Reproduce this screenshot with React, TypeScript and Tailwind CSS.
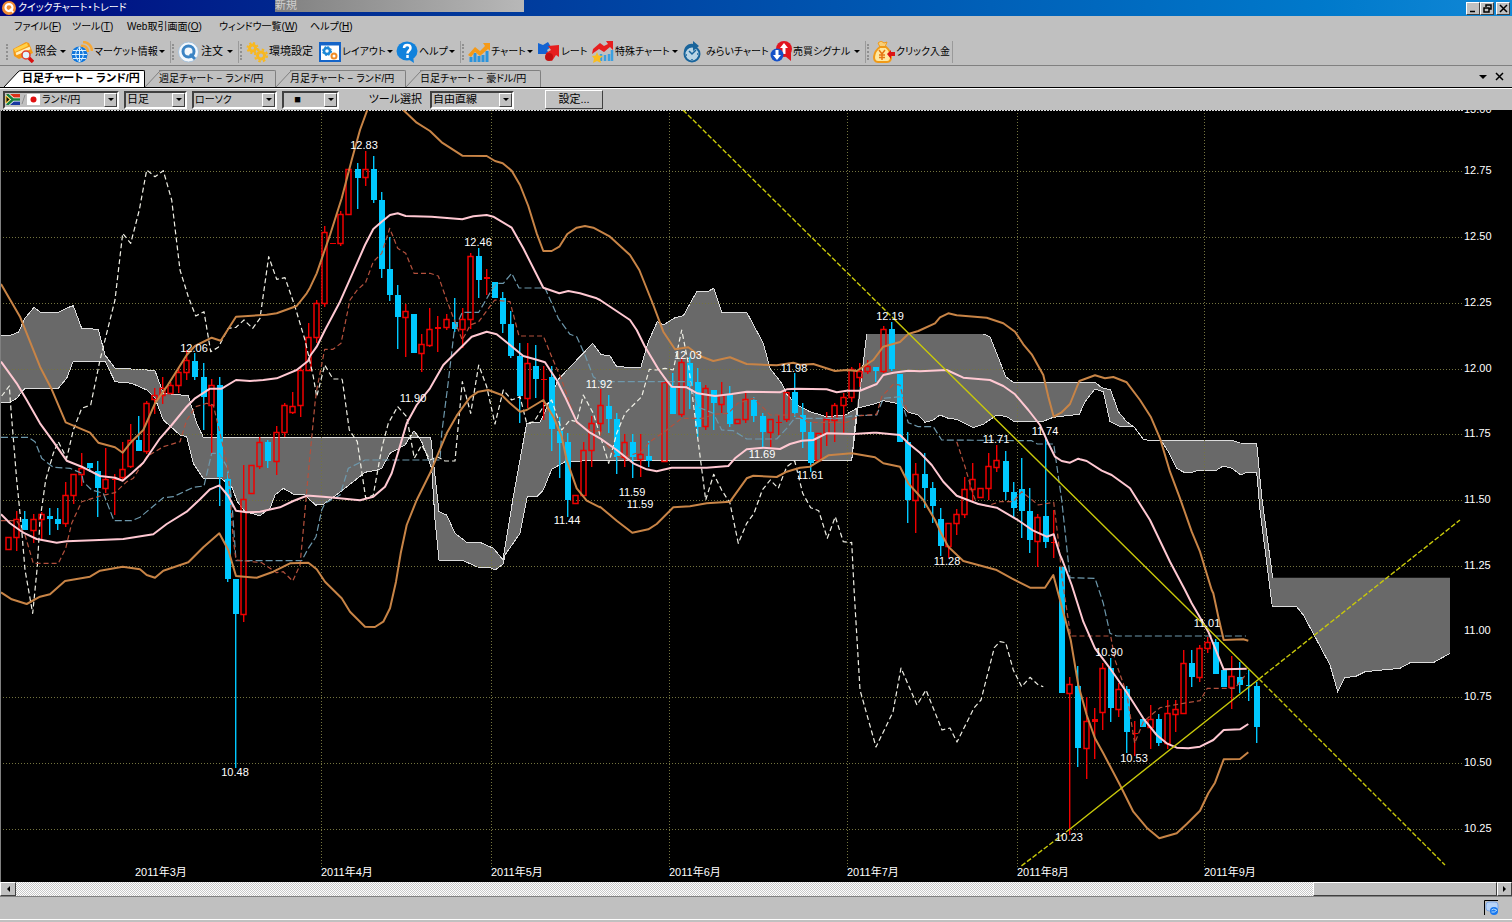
import type { ReactNode } from 'react';
import clsx from 'clsx';

const UI_FONT = "font-['Liberation_Sans','Noto_Sans_CJK_JP',sans-serif]";
const KANA = "[font-feature-settings:'palt']";

// kana labels are set one step smaller than kanji-only ones
const labelSize = (text: string) => (/[ぁ-んァ-ン]/.test(text) ? 'text-[10px]' : 'text-[11px]');

type Candle = [slot: number, top: number, bottom: number, high: number, low: number, kind: 'u' | 'd'];

const candles: Candle[] = [
  [0, 537, 549, 537, 549, 'u'], [1, 519, 537, 511, 551, 'u'], [2, 519, 530, 511, 530, 'd'], [3, 519, 530, 514, 543, 'u'],
  [4, 514, 519, 512, 539, 'u'], [5, 516, 519, 508, 535, 'd'], [6, 519, 524, 508, 530, 'd'], [7, 495, 523, 482, 527, 'u'],
  [8, 474, 495, 474, 504, 'u'], [9, 468, 474, 453, 486, 'u'], [10, 463, 468, 463, 472, 'd'], [11, 471, 488, 461, 517, 'd'],
  [12, 479, 488, 448, 493, 'u'], [13, 479, 480, 474, 515, 'u'], [14, 469, 477, 442, 480, 'u'], [15, 440, 466, 424, 468, 'u'],
  [16, 440, 451, 416, 451, 'd'], [17, 403, 451, 401, 454, 'u'], [18, 395, 399, 388, 414, 'u'], [19, 388, 395, 377, 404, 'u'],
  [20, 385, 393, 382, 393, 'u'], [21, 372, 385, 367, 393, 'u'], [22, 360, 372, 350, 380, 'u'], [23, 361, 377, 353, 380, 'd'],
  [24, 377, 397, 363, 430, 'd'], [25, 385, 405, 379, 453, 'u'], [26, 385, 477, 377, 506, 'd'], [27, 479, 579, 472, 582, 'd'],
  [28, 579, 614, 579, 768, 'd'], [29, 499, 614, 465, 622, 'u'], [30, 465, 493, 465, 493, 'u'], [31, 442, 466, 437, 469, 'u'],
  [32, 442, 461, 440, 468, 'd'], [33, 432, 461, 426, 475, 'u'], [34, 405, 432, 403, 437, 'u'], [35, 406, 412, 392, 414, 'u'],
  [36, 370, 405, 367, 417, 'u'], [37, 337, 370, 323, 370, 'u'], [38, 303, 337, 300, 343, 'u'], [39, 232, 303, 226, 307, 'u'],
  [40, 243, 244, 243, 244, 'u'], [41, 214, 243, 211, 246, 'u'], [42, 169, 214, 169, 214, 'u'], [43, 169, 178, 163, 209, 'd'],
  [44, 169, 177, 151, 186, 'u'], [45, 169, 200, 156, 203, 'd'], [46, 200, 269, 192, 278, 'd'], [47, 269, 295, 237, 301, 'd'],
  [48, 295, 317, 285, 349, 'd'], [49, 311, 317, 304, 357, 'u'], [50, 314, 353, 314, 353, 'd'], [51, 344, 353, 334, 372, 'u'],
  [52, 329, 345, 308, 347, 'u'], [53, 327, 329, 316, 352, 'u'], [54, 319, 327, 314, 330, 'u'], [55, 322, 329, 298, 332, 'd'],
  [56, 319, 329, 308, 348, 'u'], [57, 256, 319, 253, 329, 'u'], [58, 256, 280, 248, 298, 'd'], [59, 277, 279, 269, 295, 'u'],
  [60, 282, 298, 282, 298, 'd'], [61, 298, 324, 292, 333, 'd'], [62, 324, 356, 311, 358, 'd'], [63, 356, 396, 343, 423, 'd'],
  [64, 363, 398, 343, 408, 'u'], [65, 366, 379, 345, 398, 'd'], [66, 379, 380, 366, 420, 'u'], [67, 377, 429, 366, 451, 'd'],
  [68, 431, 443, 417, 478, 'd'], [69, 442, 500, 433, 517, 'd'], [70, 495, 503, 495, 503, 'u'], [71, 450, 495, 442, 495, 'u'],
  [72, 423, 450, 416, 467, 'u'], [73, 405, 423, 389, 432, 'u'], [74, 406, 419, 395, 433, 'd'], [75, 419, 457, 413, 474, 'd'],
  [76, 442, 457, 434, 467, 'u'], [77, 442, 457, 434, 478, 'd'], [78, 454, 459, 434, 477, 'u'], [79, 456, 461, 441, 467, 'd'],
  [81, 382, 461, 382, 461, 'u'], [82, 387, 414, 373, 414, 'd'], [83, 362, 414, 357, 417, 'u'], [84, 363, 386, 357, 409, 'd'],
  [85, 382, 427, 368, 437, 'd'], [86, 388, 426, 385, 430, 'u'], [87, 390, 403, 390, 430, 'd'], [88, 395, 404, 382, 413, 'u'],
  [89, 395, 424, 386, 427, 'd'], [90, 419, 423, 419, 423, 'u'], [91, 399, 419, 392, 423, 'u'], [92, 400, 416, 397, 422, 'd'],
  [93, 416, 432, 413, 447, 'd'], [94, 419, 432, 419, 447, 'u'], [95, 422, 423, 415, 435, 'u'], [96, 392, 419, 392, 422, 'u'],
  [97, 392, 413, 373, 417, 'd'], [98, 415, 432, 403, 448, 'd'], [99, 432, 463, 422, 472, 'd'], [100, 433, 460, 433, 460, 'u'],
  [101, 419, 433, 412, 446, 'u'], [102, 405, 420, 403, 442, 'u'], [103, 397, 405, 393, 433, 'u'], [104, 369, 397, 367, 402, 'u'],
  [105, 371, 377, 363, 387, 'u'], [106, 366, 371, 360, 374, 'u'], [107, 367, 371, 367, 382, 'd'], [108, 329, 371, 326, 373, 'u'],
  [109, 329, 369, 322, 371, 'd'], [110, 374, 442, 374, 442, 'd'], [111, 442, 500, 432, 523, 'd'], [112, 474, 500, 463, 533, 'u'],
  [113, 474, 488, 453, 508, 'd'], [114, 488, 506, 482, 523, 'd'], [115, 519, 546, 508, 556, 'd'], [116, 523, 546, 523, 558, 'u'],
  [117, 514, 523, 509, 535, 'u'], [118, 489, 514, 477, 518, 'u'], [119, 479, 489, 463, 501, 'u'], [120, 488, 497, 488, 497, 'u'],
  [121, 466, 488, 453, 500, 'u'], [122, 460, 467, 445, 472, 'u'], [123, 461, 492, 451, 500, 'd'], [124, 492, 508, 482, 518, 'd'],
  [125, 489, 511, 458, 538, 'd'], [126, 511, 540, 488, 553, 'd'], [127, 517, 541, 514, 567, 'u'], [128, 516, 542, 437, 548, 'd'],
  [129, 542, 543, 510, 558, 'u'], [130, 567, 693, 567, 693, 'd'], [131, 684, 693, 677, 835, 'u'], [132, 686, 748, 666, 767, 'd'],
  [133, 721, 748, 697, 779, 'u'], [134, 719, 722, 708, 759, 'u'], [135, 668, 712, 663, 730, 'u'], [136, 668, 708, 658, 722, 'd'],
  [137, 689, 709, 683, 717, 'u'], [138, 689, 732, 686, 753, 'd'], [139, 733, 734, 721, 756, 'u'], [140, 719, 727, 719, 727, 'd'],
  [141, 719, 727, 705, 749, 'u'], [142, 719, 743, 714, 746, 'd'], [143, 713, 743, 700, 749, 'u'], [144, 709, 714, 700, 732, 'u'],
  [145, 663, 713, 650, 713, 'u'], [146, 663, 677, 650, 687, 'd'], [147, 648, 677, 645, 682, 'u'], [148, 642, 648, 637, 653, 'u'],
  [149, 642, 674, 639, 674, 'd'], [150, 670, 687, 670, 687, 'd'], [151, 676, 687, 656, 709, 'u'], [152, 677, 685, 662, 693, 'd'],
  [153, 685, 686, 670, 701, 'd'], [154, 686, 727, 682, 743, 'd'],
];

// Series are kept per tile: each tile has an origin and its points are in thirds of a chart unit
const tiles = {
  A: [0, 110], B: [0, 480], C: [310, 110], D: [310, 380], E: [600, 270],
  F: [840, 300], G: [1000, 560], H: [1240, 420], I: [1080, 350],
} as const;

type Piece = [keyof typeof tiles, string];

function points(pieces: Piece[]) {
  return pieces
    .flatMap(([tile, data]) =>
      data.split(' ').map(p => {
        const [x, y] = p.split(',').map(Number);
        return `${(tiles[tile][0] + x / 3).toFixed(1)},${(tiles[tile][1] + y / 3).toFixed(1)}`;
      }),
    )
    .join(' ');
}

const pink: Piece[][] = [
  [
    ['A', '3,755 50,820 80,870 120,940 160,995 200,1052 245,1070 300,1098 345,1103 368,1112 395,1090 430,1058 480,985 515,945 560,890 585,865 630,836 665,836 708,810 750,813 790,810 830,805 890,780 925,752'],
    ['C', '0,738 20,710 45,660 90,575 130,485 165,405 190,357 215,335 240,315 263,310 287,318 365,320 457,328 490,319 530,315 550,320 605,353 640,415 700,533 748,550 775,543 810,550 860,565'],
    ['E', '0,90 90,150 110,180 135,230 175,297 200,332 215,350 260,352 292,370 345,378 395,372 440,365 540,367 560,358 590,356 680,358 710,367 740,362 780,362 830,342 850,315'],
    ['F', '160,218 205,212 240,214 320,210 370,233 450,240 490,258 525,283 565,330 600,375 625,430 645,470 665,483 690,488 715,476'],
    ['I', '0,328 20,333 65,362 95,375 150,415 210,510 270,635 315,720'],
    ['G', '575,130 625,215 671,328 740,326'],
  ],
  [
    ['B', '3,103 30,130 70,158 110,177 170,188 200,184 280,181 370,177 460,163 500,132 560,95 600,58 630,28 658,16 685,48 708,92 740,97 780,95 840,82 880,63 920,47'],
    ['D', '0,347 40,350 80,354 150,361 190,350 225,320 245,280 265,215 290,130 320,75'],
    ['C', '360,835 400,765 440,725 485,680 530,665 560,673 600,705 640,738 675,748 705,757 730,795'],
    ['D', '740,0 765,50 800,125 840,158'],
    ['E', '0,505 50,540 100,580 140,598 170,604 215,593 320,593 385,588 405,565 440,538 490,533 540,537 570,522 605,512 640,510 680,490 760,492 820,488'],
    ['F', '110,398 180,405 205,430 240,458 275,495 310,545 350,587 415,612 470,623 530,658 580,692 620,710 641,703 660,765'],
    ['G', '187,0 215,75 250,185 285,265 330,325 380,397 430,475 470,525 500,550 530,563 565,565 600,560 640,540 671,510 720,508 745,492'],
  ],
];

const orange: Piece[][] = [
  [
    ['A', '3,522 60,620 120,770 155,838 197,937 270,968 295,998 345,1012 368,1028 390,1000 430,960 465,880 500,830 560,735 585,708 635,683 662,692 708,620 800,614 830,610 890,588 920,550'],
    ['C', '0,533 20,490 60,375 95,265 125,150 150,60 172,0'],
  ],
  [
    ['C', '280,0 320,38 360,63 395,97 457,137 530,138 555,153 578,160 605,182 630,225 655,288 680,370 700,423 725,423 748,410 772,372 800,353 825,348 850,353 900,380'],
    ['E', '90,-45 118,0 160,105 190,185 225,238 265,232 300,258 340,273 390,262 440,282 530,286 580,278 600,284 640,282 705,303 740,300 770,303 820,270 850,230'],
    ['F', '180,126 205,102 235,93 285,70 300,52 325,40 350,46 440,53 490,70 525,95 550,133 575,163 610,225 625,290 641,350 665,337 690,312 718,243 765,226 795,235 820,231'],
    ['I', '140,97 180,150 212,200 240,265 270,365 300,445 335,545 360,605 395,720'],
    ['G', '640,100 655,170 671,240 730,238 745,242'],
  ],
  [
    ['B', '3,337 35,358 80,372 120,350 150,343 195,303 270,290 300,272 368,260 420,268 440,285 465,293 490,272 565,247 610,202 658,160 685,210 708,288 770,293 820,275 870,250 925,248'],
    ['D', '0,552 20,568 45,605 95,655 120,695 165,740 195,741 220,725 240,685 258,605 272,520 290,435 320,360 360,280 385,220 410,160 440,107 480,52 505,35 535,30 575,45 600,70 630,95 650,90 700,60 730,110 755,170 770,240 800,325 830,362 870,382'],
    ['E', '0,710 50,752 97,788 145,778 170,762 220,712 270,709 320,700 390,695 440,625 460,617 530,621 560,605 600,593 630,590 685,556 755,550 825,562 850,580'],
    ['F', '180,500 205,550 250,600 285,660 301,695 325,740 370,783 470,810 515,835 570,863 615,863'],
    ['G', '160,45 212,240 235,375 260,465 285,535 310,580 360,675 400,755 440,803 478,835 530,820 560,792 600,752 625,700 645,668 671,598 720,597 745,577'],
  ],
];

const lagging: Piece[][] = [
  [
    ['A', '5,858 28,828 33,900 50,1110'],
    ['B', '65,150 75,270 98,400 112,260 120,120 137,0'],
    ['A', '160,1030 175,995 200,1045 220,960 245,895 272,885 300,750 345,570 368,370 392,400 418,300 440,180 465,200 490,182 515,270 540,480 565,560 587,618 612,605 632,725 655,712 685,655 708,652 732,630 758,655 780,625 806,440 830,508 855,503 885,590 915,690 940,800 950,860'],
    ['C', '44,765 69,807 95,807'],
    ['D', '97,0 118,150 142,185 167,355 190,345 215,205 235,130 263,80 290,110 313,235 335,195 360,240 382,230 405,243 435,243 457,5 482,100'],
    ['C', '506,765 530,830'],
    ['D', '555,132 580,30 605,60 630,50 650,130 672,125 700,80 725,60 755,150 780,120 800,125 820,45 850,100'],
    ['E', '26,580 50,490 75,430 125,380 148,298 170,300 195,295 220,300 245,180 265,280 290,480 317,690 341,613 365,660 390,700 415,820 440,760 462,730 487,660 511,630 535,655 560,590 584,573 608,670 632,713 656,722 682,805 706,740 730,815 753,818'],
    ['F', '35,727 42,865'],
    ['G', '-420,390 -372,561 -321,456 -297,324 -249,435 -222,390 -174,510 -150,504 -129,546 -78,444 -57,420 -17,263 0,245 17,248 40,330 65,380 90,352 115,375 130,380'],
  ],
];

const base: Piece[][] = [
  [
    ['A', '3,982 85,982 105,995 125,1045 160,1072 210,1075 245,1090'],
    ['B', '250,5 275,30 310,40 342,122 395,122 420,112 490,53 520,50 580,22 612,18'],
    ['A', '635,1030 658,1030 683,1075'],
    ['B', '695,60 708,242 905,242 925,205 945,175'],
    ['D', '18,470 35,390 45,370 90,345 115,265 165,240 390,240 395,160'],
    ['C', '415,815 433,660 457,607 506,607 545,540 560,520 580,520 605,490 627,534 705,534 745,625 780,673 800,680 825,735 850,800'],
    ['E', '0,335 270,335 292,410 340,430 365,480 400,482 440,507 530,507 560,475 584,445 720,445 760,437 830,435'],
    ['F', '130,295 180,290 205,368 235,380 280,380 305,420 575,422 592,432 641,432 665,600 690,833 765,835'],
    ['G', '310,130 330,220 350,228 738,228'],
  ],
];

const conversion: Piece[][] = [
  [
    ['B', '3,122 50,122 75,165 100,250 175,250 197,205 215,130 245,65 300,48 345,38 380,5'],
    ['A', '400,1105 440,1040 490,1010 540,995 560,930 587,890 620,880 640,885 660,970 683,1070'],
    ['B', '700,180 708,240 785,248 830,278 850,275 878,303 900,255 910,150'],
    ['A', '925,1090 945,880'],
    ['C', '20,840 44,718 69,718 93,700 120,570 142,540 167,517 190,455 215,430 239,355 263,415 287,430 312,490 360,490 385,498 410,570 433,630 457,690 481,645 506,635 554,570 600,575 627,678 700,678 725,740 755,810'],
    ['D', '800,130 850,155 875,150'],
    ['E', '0,500 50,560 75,560 125,545 150,515 200,480 245,445 310,445 340,433 385,430 413,400 460,385 487,410 510,435 590,435 625,457 740,457 780,437 830,433'],
    ['F', '125,290 160,253 180,255 195,315 205,340'],
  ],
  [
    ['F', '350,425 375,500 398,580 410,610 440,618 480,605 520,605 545,575 595,615 641,607 655,720'],
    ['G', '187,60 212,228 332,228 345,300 380,400 404,550 430,485 480,443 550,430 600,422 622,385 705,385 740,340'],
  ],
];

const spanA: Piece[] = [
  ['A', '3,676 30,676 55,667 75,625 102,592 122,607 175,607 200,594 220,587 245,655 295,658 315,735 345,775 415,778 465,782 490,850 565,857 590,940 610,982 930,982'],
  ['D', '362,172 387,395 410,405 435,460 470,487 510,487 550,505 580,540 582,520 610,350 650,130 690,127 705,95'],
  ['C', '745,808 800,750 848,700 870,730'],
  ['E', '0,253 30,258 50,290 122,293 145,215 172,155 190,165 225,143 250,137 290,65 325,64 341,55 365,127 440,127 490,220 510,295 545,340 560,372 590,405 630,425 680,440 735,435 770,415'],
];
const spanB: Piece[] = [
  ['A', '3,877 30,877 50,865 75,835 175,835 200,805 220,753 315,753 345,815 395,820 440,840 465,865 490,930 540,975 560,980 580,1060 610,1105 665,1107 683,1120'],
  ['B', '695,20 712,65 735,95 780,107 810,85 825,45 850,25 880,42 915,45 935,65 950,77'],
  ['D', '15,375 40,373 70,352 130,305 165,277 200,270 215,265 240,220 285,195 312,152 335,185 365,265 375,420 387,540 460,542 505,562 540,563 555,570 580,552 585,525 630,460 652,350 680,350 700,330 725,268 765,245'],
  ['E', '0,571 755,571 770,415'],
];
const spanC: Piece[] = [
  ['E', '770,415 800,193'],
  ['F', '80,102 435,102 450,110 470,160 497,230 520,247 765,247 785,263 812,270 835,335 860,365 880,380'],
];
const spanD: Piece[] = [
  ['E', '770,415 820,403 850,392'],
  ['F', '130,302 180,312 205,337 235,345 255,367 280,360 300,345 325,355 350,358 400,383 430,373 470,345 500,350 520,363 612,363 640,352 718,343 735,305 765,267 790,275 810,365 840,380 880,380'],
];
const spanLink: Piece[] = [['I', '160,228 190,268 205,271 243,271']];
const spanE: Piece[] = [
  ['I', '243,271 455,271 480,279 530,280'],
  ['H', '65,230 98,473 630,473'],
];
const spanF: Piece[] = [
  ['I', '243,271 265,305 290,355 312,367 335,367 360,360 410,360 430,348 455,355 483,375 500,367 530,367'],
  ['H', '60,270 97,560 170,560 190,585 225,650 270,735 293,815 315,772 345,770 375,755 480,745 512,727 582,727 630,700'],
];

function reversed(p: string) {
  return p.split(' ').reverse().join(' ');
}

const clouds: [Piece[], Piece[]][] = [
  [spanA, spanB],
  [spanC, spanD],
  [spanE, spanF],
];

const priceLabels: [string, number, number][] = [
  ['12.06', 194, 348], ['12.83', 364, 145], ['12.46', 478, 242], ['11.90', 413, 398], ['10.48', 235, 772],
  ['11.44', 567, 520], ['11.92', 599, 384], ['11.59', 632, 492], ['11.59', 640, 504], ['12.03', 688, 355],
  ['11.98', 794, 368], ['11.69', 762, 454], ['11.61', 810, 475], ['12.19', 890, 316], ['11.28', 947, 561],
  ['11.71', 996, 439], ['11.74', 1045, 431], ['11.01', 1207, 623], ['10.90', 1109, 652], ['10.53', 1134, 758],
  ['10.23', 1069, 837],
];

const axis: [string, number, boolean][] = [
  ['13.00', 109, false], ['12.75', 170, true], ['12.50', 236, true], ['12.25', 302, true], ['12.00', 368, true],
  ['11.75', 433, true], ['11.50', 499, true], ['11.25', 565, true], ['11.00', 630, false], ['10.75', 696, true],
  ['10.50', 762, true], ['10.25', 828, true],
];

const months: [string, number, boolean][] = [
  ['2011年3月', 135, false], ['2011年4月', 321, true], ['2011年5月', 491, true], ['2011年6月', 669, true],
  ['2011年7月', 847, true], ['2011年8月', 1017, true], ['2011年9月', 1204, true],
];

function Series({ data, className, dash, width = 1 }: { data: Piece[][]; className: string; dash?: string; width?: number }) {
  return (
    <g className={className} fill="none" strokeWidth={width} strokeDasharray={dash} strokeLinejoin="round">
      {data.map((d, i) => (
        <polyline key={i} points={points(d)} />
      ))}
    </g>
  );
}

function PriceChart() {
  return (
    <svg viewBox="0 110 1512 772" className="block w-full h-auto bg-black" role="img" aria-label="ランド/円 日足">
      {clouds.map(([a, b], i) => (
        <polygon key={i} points={`${points(a)} ${reversed(points(b))}`} className="fill-[#696969]" />
      ))}
      <g className="stroke-[#dcdcdc]" fill="none" shapeRendering="crispEdges">
        {[spanA, spanB, spanD, spanLink, spanF].map((s, i) => (
          <polyline key={i} points={points(s)} />
        ))}
        <polyline points={points([['E', '755,571 800,193']])} />
        <polyline points={points([['F', '430,102 450,110 470,160 497,230 520,247 765,247 785,263 812,270 835,335 860,365 880,380']])} />
        <polyline points={points([['I', '243,271 455,271 480,279 530,280'], ['H', '65,230 98,473']])} />
      </g>

      <g className="stroke-[#74743f]" strokeDasharray="1 2" shapeRendering="crispEdges">
        {axis.filter(a => a[2]).map(([label, y]) => (
          <line key={label} x1={0} x2={1463} y1={y + 1.5} y2={y + 1.5} />
        ))}
        {months.filter(m => m[2]).map(([label, x]) => (
          <line key={label} x1={x + 0.5} x2={x + 0.5} y1={110} y2={867} />
        ))}
      </g>
      <line x1={0} x2={1463} y1={110.5} y2={110.5} className="stroke-[#d8d8d8]" strokeDasharray="2 1" shapeRendering="crispEdges" />

      {candles.map(([slot, top, bottom, high, low, kind]) => {
        const x = Math.round(8.2 + slot * 8.1);
        const h = bottom - top;
        return kind === 'd' ? (
          <g key={slot} className="fill-[#00c8ff]">
            <rect x={x} y={high} width={1.4} height={low - high} />
            <rect x={x - 2} y={top} width={6} height={Math.max(h, 1)} />
          </g>
        ) : (
          <g key={slot} className="fill-[#f00000]">
            <rect x={x} y={high} width={1.4} height={Math.max(top - high, 0)} />
            <rect x={x} y={bottom} width={1.4} height={Math.max(low - bottom, 0)} />
            {h < 4 ? (
              <rect x={x - 2} y={top} width={6} height={h} />
            ) : (
              <rect x={x - 2} y={top + 0.5} width={5} height={h} className="fill-none stroke-[#f00000]" strokeWidth={1.5} />
            )}
          </g>
        );
      })}

      <Series data={lagging} className="stroke-[#f0f0e6]" dash="5 3" width={1.2} />
      <Series data={base} className="stroke-[#6d98ac]" dash="7 3" width={1.2} />
      <Series data={conversion} className="stroke-[#b4503c]" dash="5 3" width={1.2} />
      <Series data={orange} className="stroke-[#c88446]" width={2} />
      <Series data={pink} className="stroke-[#ffc8d2]" width={2} />

      <g className="stroke-[#c8c80a]" fill="none" strokeWidth={1.4}>
        <path d="M892 317L1259 679M1070 829L1259 679" />
        <path d="M683 110L892 317M1259 679L1445 865M1070 829L1020 867M1259 679L1460 520" strokeDasharray="5 2" />
      </g>

      <g className="fill-white font-['Liberation_Sans','Noto_Sans_CJK_JP',sans-serif] text-[11px]">
        {priceLabels.map(([label, x, y]) => (
          <text key={`${label}-${x}`} x={x} y={y + 4} textAnchor="middle">{label}</text>
        ))}
        {axis.map(([label, y]) => (
          <text key={label} x={1464} y={y + 4}>{label}</text>
        ))}
        {months.map(([label, x]) => (
          <text key={label} x={x} y={876}>{label}</text>
        ))}
      </g>
      <rect x={0} y={110} width={1} height={772} className="fill-[#808080]" />
    </svg>
  );
}

function Icon({ children }: { children: ReactNode }) {
  return (
    <svg viewBox="0 0 22 22" className="size-[22px] shrink-0" aria-hidden="true">
      {children}
    </svg>
  );
}

const icons = {
  inquiry: (
    <Icon>
      <path d="M1 8L14 1l3 1 4 10-14 6-5-3z" fill="#f59a16" />
      <path d="M2 8L15 2l1 3L3 11z" fill="#ffd24a" />
      <path d="M4 13l14-6" stroke="#fff0c0" strokeWidth="2.5" />
      <circle cx="14" cy="14" r="4" fill="#dff4ff" stroke="#e04030" strokeWidth="1.5" />
      <path d="M17 17l4 4" stroke="#d81010" strokeWidth="3.5" />
    </Icon>
  ),
  globe: (
    <Icon>
      <circle cx="8.5" cy="13.5" r="8" fill="#1177dc" />
      <path d="M1 13.5h15M8.5 6v15M2 9.5h13M2 17.5h13M8.5 6c-5 4-5 11 0 15M8.5 6c5 4 5 11 0 15" stroke="#d8f0ff" fill="none" />
      <path d="M10 5c4-1 7 2 7 6M12 1c5 0 9 4 9 9" stroke="#f5a838" strokeWidth="2.5" fill="none" />
    </Icon>
  ),
  order: (
    <Icon>
      <circle cx="10.5" cy="11" r="10" fill="#f4f8fc" stroke="#a9c4dc" />
      <circle cx="10.5" cy="10.5" r="5.5" fill="none" stroke="#3c84c4" strokeWidth="3" />
      <path d="M12 13l5 5" stroke="#3c84c4" strokeWidth="3" />
    </Icon>
  ),
  gears: (
    <Icon>
      <circle cx="6.500" cy="7" r="3" fill="none" stroke="#f8b820" strokeWidth="3" />
      <circle cx="6.500" cy="7" r="5" fill="none" stroke="#f8b820" strokeWidth="2" strokeDasharray="2 1.930" />
      <circle cx="15" cy="14.500" r="3.500" fill="none" stroke="#f8b820" strokeWidth="3" />
      <circle cx="15" cy="14.500" r="6" fill="none" stroke="#f8b820" strokeWidth="2" strokeDasharray="2.500 2.210" />
    </Icon>
  ),
  layout: (
    <Icon>
      <rect x="1" y="2" width="20" height="18" fill="#fff" stroke="#1464c8" strokeWidth="2" />
      <path d="M1 3h20" stroke="#1464c8" strokeWidth="3" />
      <circle cx="8" cy="10" r="3" fill="none" stroke="#1c88d8" strokeWidth="2.5" />
      <circle cx="8" cy="10" r="4.5" fill="none" stroke="#1c88d8" strokeDasharray="2 1.53" />
      <circle cx="15" cy="15" r="2.5" fill="none" stroke="#f08c28" strokeWidth="2" />
    </Icon>
  ),
  help: (
    <Icon>
      <path d="M12 18l6 4-1-7z" fill="#1182dc" />
      <ellipse cx="11" cy="10" rx="10.5" ry="9.5" fill="#1182dc" />
      <path d="M8 7c0-4 6.500-4 6.500 0 0 2.500-3 2.500-3 5.500M11.500 14v3" stroke="#fff" strokeWidth="2.5" fill="none" />
    </Icon>
  ),
  chart: (
    <Icon>
      <path d="M3 21v-5M7 21v-9M11 21v-6M15 21v-7M19 21v-11" stroke="#2c94dc" strokeWidth="3" />
      <path d="M0 14l7-8 5 4 5-5-2-3h7v8l-2-2-8 7-5-4-4 5z" fill="#f59a18" />
    </Icon>
  ),
  rate: (
    <Icon>
      <path d="M0 2l5 2 5-3 3 5-4 3 2 4H0z" fill="#1464d2" />
      <path d="M21 4v12l-3-2-4 6-6-3V12l5-3-3-4z" fill="#e61e1e" />
      <circle cx="11" cy="16" r="4" fill="#c01010" />
    </Icon>
  ),
  special: (
    <Icon>
      <path d="M9 20v-7M13 20v-6M17 20v-7M20 20V9" stroke="#3ca0e0" strokeWidth="2.5" />
      <path d="M1 8l7-6 4 3 4-2-2-3h7v9l-3-3-6 5-5-3-7 5z" fill="#e61e1e" />
      <path d="M5 11l1.500 3.500L11 15l-3 2.500L9 22l-4-2-4 2 1-4.500L0 15l3.500-.5z" fill="#fabe1e" />
    </Icon>
  ),
  future: (
    <Icon>
      <circle cx="9" cy="13" r="7.5" fill="#b9d4e4" stroke="#19649b" strokeWidth="2" />
      <path d="M1 11C1 5 6 2 10 3V0l6 5-6 5V6C6 6 3 8 3 11z" fill="#19649b" />
      <path d="M6 10l3 3 4-4M9 18v1M14 13h1M3 14h1" stroke="#19649b" strokeWidth="1.5" fill="none" />
    </Icon>
  ),
  signal: (
    <Icon>
      <circle cx="14" cy="8" r="8" fill="#e1141e" />
      <path d="M16 12h5v8l-6-5z" fill="#e1141e" />
      <path d="M14 2l4 5h-2.500v6h-3V7H10z" fill="#fff" />
      <circle cx="7" cy="14" r="6.5" fill="#1450c8" />
      <path d="M7 19l-4-5h2.500V9h3v5H11z" fill="#fff" />
    </Icon>
  ),
  deposit: (
    <Icon>
      <path d="M5 2l3-2 3 2 3-1-2 5H7z" fill="#f8d078" stroke="#f09a18" />
      <path d="M7 6h6c6 5 7 15 1 15H5c-6 0-5-10 2-15z" fill="#ffe9a0" stroke="#f09a18" strokeWidth="2" />
      <path d="M6 9l3 4 3-4M9 13v6M6 14h6M6 16.500h6" stroke="#e67814" strokeWidth="1.5" fill="none" />
      <path d="M22 11v4h-4v3l-4-5 4-4v2z" fill="#dc1414" />
    </Icon>
  ),
};

interface Tool {
  label: string;
  icon: keyof typeof icons;
  width: string;
  menu?: boolean;
}

const toolGroups: Tool[][] = [
  [
    { label: '照会', icon: 'inquiry', width: 'w-[59px]', menu: true },
    { label: 'マーケット情報', icon: 'globe', width: 'w-[99px]', menu: true },
  ],
  [{ label: '注文', icon: 'order', width: 'w-[60px]', menu: true }],
  [
    { label: '環境設定', icon: 'gears', width: 'w-[73px]' },
    { label: 'レイアウト', icon: 'layout', width: 'w-[77px]', menu: true },
    { label: 'ヘルプ', icon: 'help', width: 'w-[64px]', menu: true },
  ],
  [
    { label: 'チャート', icon: 'chart', width: 'w-[70px]', menu: true },
    { label: 'レート', icon: 'rate', width: 'w-[54px]' },
    { label: '特殊チャート', icon: 'special', width: 'w-[91px]', menu: true },
    { label: 'みらいチャート', icon: 'future', width: 'w-[87px]' },
    { label: '売買シグナル', icon: 'signal', width: 'w-[95px]', menu: true },
  ],
  [{ label: 'クリック入金', icon: 'deposit', width: 'w-[79px]' }],
];

const menus = [
  { label: 'ファイル', hot: 'F', width: 'w-[58px]' },
  { label: 'ツール', hot: 'T', width: 'w-[55px]' },
  { label: 'Web取引画面', hot: 'O', width: 'w-[92px]' },
  { label: 'ウィンドウ一覧', hot: 'W', width: 'w-[91px]' },
  { label: 'ヘルプ', hot: 'H', width: 'w-[50px]' },
];

const tabs = [
  { label: '日足チャート − ランド/円', width: 'w-[123px]', active: true },
  { label: '週足チャート − ランド/円', width: 'w-[117px]' },
  { label: '月足チャート − ランド/円', width: 'w-[116px]' },
  { label: '日足チャート − 豪ドル/円', width: 'w-[121px]' },
];

const RAISED = 'border border-t-white border-l-white border-r-[#404040] border-b-[#404040] bg-[#c0c0c0]';

function Caret() {
  return <span className="border-x-3 border-t-3 border-x-transparent border-t-black" />;
}

function WindowButton({ label, d }: { label: string; d: string }) {
  return (
    <button aria-label={label} className={clsx('w-[14px] h-[13px] flex items-center justify-center', RAISED)}>
      <svg viewBox="0 0 9 9" className="size-[9px]">
        <path d={d} stroke="#000" strokeWidth="1.5" fill="none" />
      </svg>
    </button>
  );
}

function Combo({ label, value, width, children }: { label: string; value: string; width: string; children?: ReactNode }) {
  return (
    <label className={clsx('flex items-center h-[18px] border-2 border-t-[#404040] border-l-[#404040] border-r-white border-b-white', width)}>
      {children}
      <select aria-label={label} className={clsx('appearance-none flex-1 min-w-0 h-full pl-px leading-none outline-none', labelSize(value))}>
        <option>{value}</option>
      </select>
      <span className={clsx('w-[13px] h-full flex items-center justify-center shrink-0', RAISED)}>
        <Caret />
      </span>
    </label>
  );
}

export default function App() {
  return (
    <div className={clsx('min-h-screen bg-[#c0c0c0] text-black text-[11px] leading-none whitespace-nowrap overflow-hidden', UI_FONT, KANA)}>
      <header className="relative flex items-center h-4 px-[2px] bg-linear-to-r from-[#00047f] to-[#1188d6] text-white">
        <svg viewBox="0 0 16 16" className="size-[14px] mr-[2px]" aria-hidden="true">
          <circle cx="8" cy="8" r="8" fill="#f08c32" />
          <circle cx="8" cy="7.500" r="4" fill="none" stroke="#fff" strokeWidth="2.5" />
          <path d="M9 9l4 4" stroke="#fff" strokeWidth="2" />
        </svg>
        <h1 className="text-[10px] flex-1">クイックチャート・トレード</h1>
        <div className="absolute left-[275px] top-0 w-[249px] h-3 bg-linear-to-r from-[#808080] to-[#b8b8b8] text-[#d0d0d0] text-[11px] leading-[10px]">新規</div>
        <div className="flex">
          <WindowButton label="最小化" d="M1 7.500h5" />
          <WindowButton label="元に戻す" d="M3 3V1h5v4H6M1 4h5v4H1z" />
          <span className="w-[2px]" />
          <WindowButton label="閉じる" d="M1 1l7 7M8 1l-7 7" />
        </div>
      </header>

      <nav className="flex items-center h-[22px] pl-[14px] text-[10px]">
        {menus.map(m => (
          <button key={m.label} className={clsx('text-left', m.width)}>
            {m.label}(<u>{m.hot}</u>)
          </button>
        ))}
      </nav>

      <div role="toolbar" className="flex items-center h-7 pl-[5px] border-b border-[#808080]">
        {toolGroups.map((group, i) => (
          <div key={i} className="flex items-center border-r border-[#808080]/60 h-[22px]">
            <span className="w-[2px] h-4 ml-px mr-1 border-l-2 border-dotted border-[#909090]" />
            {group.map(t => (
              <button key={t.label} className={clsx('flex items-center gap-px', t.width)}>
                {icons[t.icon]}
                <span className={labelSize(t.label)}>{t.label}</span>
                {t.menu && <span className="ml-auto mr-[5px] flex"><Caret /></span>}
              </button>
            ))}
          </div>
        ))}
      </div>

      <div className="flex items-end h-[22px] pl-1 border-b border-black">
        {tabs.map(t => (
          <button key={t.label} className="flex items-end h-[17px]">
            <svg viewBox="0 0 18 17" className="w-[18px] h-[17px] shrink-0" aria-hidden="true">
              <path d="M0 17L14 2q1-1.500 4-1.500V17z" fill={t.active ? '#fff' : '#c0c0c0'} />
              <path d="M0 17L14 2q1-1.500 4-1.500" fill="none" stroke={t.active ? '#000' : '#808080'} />
            </svg>
            <span
              className={clsx(
                'h-[17px] leading-[15px] border-t border-r text-left rounded-tr-xs',
                t.active ? 'bg-white border-black font-bold' : 'border-[#808080] -ml-1 text-[10px]',
                t.width,
              )}
            >
              {t.label}
            </span>
          </button>
        ))}
        <div className="ml-auto flex items-center gap-2 h-full pr-2">
          <button aria-label="ウィンドウの一覧" className="flex"><span className="border-x-4 border-t-4 border-x-transparent border-t-black" /></button>
          <button aria-label="タブを閉じる">
            <svg viewBox="0 0 9 9" className="size-[9px]"><path d="M1 1l7 7M8 1L1 8" stroke="#000" strokeWidth="1.5" /></svg>
          </button>
        </div>
      </div>

      <div className="flex items-center gap-[5px] h-[22px] pl-[3px] border-t border-white">
        <Combo label="通貨ペア" value="ランド/円" width="w-[116px]">
          <svg viewBox="0 0 36 11" className="w-9 h-[11px] shrink-0" aria-hidden="true">
            <path d="M1 0h14v4H1z" fill="#d83018" />
            <path d="M1 7h14v4H1z" fill="#1838a0" />
            <path d="M2 0l6 5.500L2 11M7 5.500h8" stroke="#fff" strokeWidth="4" fill="none" />
            <path d="M2 0l6 5.500L2 11M7 5.500h8" stroke="#18803c" strokeWidth="2.5" fill="none" />
            <path d="M1 2l4 3.500L1 9z" fill="#101010" stroke="#f8c020" />
            <path d="M17 10l3-9" stroke="#909090" />
            <path d="M22 0h13v11H22z" fill="#fff" />
            <circle cx="28.500" cy="5.500" r="3" fill="#e01010" />
          </svg>
        </Combo>
        <Combo label="足種" value="日足" width="w-[63px]" />
        <Combo label="チャート種別" value="ローソク" width="w-[85px]" />
        <Combo label="線の太さ" value={'\u00a0\u00a0\u00a0■'} width="w-[57px]" />
        <span className="w-[81px] text-right pr-[3px]">ツール選択</span>
        <Combo label="ツール選択" value="自由直線" width="w-[84px]" />
        <button className={clsx('ml-[26px] w-[58px] h-[19px]', RAISED)}>設定...</button>
      </div>

      <main>
        <PriceChart />
        <div className="flex h-[14px] bg-[repeating-conic-gradient(#fff_0_25%,#c8c8c8_0_50%)] bg-[length:2px_2px]">
          <button aria-label="左へスクロール" className={clsx('w-4 flex items-center justify-center', RAISED)}>
            <span className="border-y-3 border-r-3 border-y-transparent border-r-black" />
          </button>
          <div className="flex-1 flex justify-end">
            <div className={clsx('w-[12.4%]', RAISED)} />
          </div>
          <button aria-label="右へスクロール" className={clsx('w-[15px] flex items-center justify-center', RAISED)}>
            <span className="border-y-3 border-l-3 border-y-transparent border-l-black" />
          </button>
        </div>
      </main>

      <footer className="flex items-center justify-end h-6 pr-3 border-t border-b border-t-[#808080] border-b-white">
        <svg viewBox="0 0 16 16" className="size-4" aria-hidden="true">
          <path d="M.5 15V.5H14" stroke="#000" fill="none" />
          <rect x="2" y="2" width="12" height="9" rx="3" fill="#b8d4f8" stroke="#7ca8e8" />
          <circle cx="10" cy="11" r="4" fill="#1878f0" />
          <path d="M7.500 12q3 1 5.500-2M7.500 10q2-2 5 0" stroke="#b8e0ff" fill="none" />
        </svg>
      </footer>
    </div>
  );
}
